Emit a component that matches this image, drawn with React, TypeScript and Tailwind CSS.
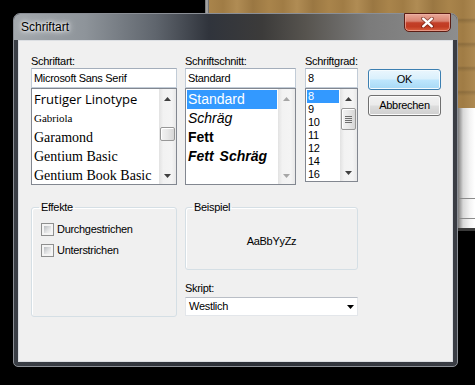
import React from "react";

const ui = "font-['Liberation_Sans',Arial,sans-serif] text-[11px] tracking-[-0.3px] text-black";

function Arrow({ dir, disabled }: { dir: "up" | "down"; disabled?: boolean }) {
  const fill = disabled ? "#a6a6a6" : "#404040";
  return (
    <svg width="7" height="4" viewBox="0 0 7 4">
      {dir === "up" ? <polygon points="3.5,0 7,4 0,4" fill={fill} /> : <polygon points="0,0 7,0 3.5,4" fill={fill} />}
    </svg>
  );
}

function ScrollBar({ thumb, disabled }: { thumb?: "font" | "size"; disabled?: boolean }) {
  return (
    <div className="w-[17px] h-full flex flex-col bg-[linear-gradient(90deg,#e2e2e2,#f2f2f2_25%,#f4f4f4_75%,#e8e8e8)]">
      <div className="h-[17px] flex items-center justify-center pt-[3px]">
        <Arrow dir="up" disabled={disabled} />
      </div>
      <div className="flex-1">
        {thumb === "font" && (
          <div className="ml-px mt-[21px] w-[15px] h-[14px] rounded-[2px] border border-[#979797] bg-[linear-gradient(90deg,#f3f3f3,#e8e8e8_50%,#d6d6d6)] shadow-[inset_1px_1px_0_#fff]" />
        )}
        {thumb === "size" && (
          <div className="ml-px mt-[2px] w-[15px] h-[22px] rounded-[2px] border border-[#979797] bg-[linear-gradient(90deg,#f3f3f3,#e8e8e8_50%,#d6d6d6)] shadow-[inset_1px_1px_0_#fff] flex flex-col items-center justify-center gap-[1px]">
            <div className="w-[7px] h-px bg-[#6e6e6e]" />
            <div className="w-[7px] h-px bg-[#6e6e6e]" />
            <div className="w-[7px] h-px bg-[#6e6e6e]" />
            <div className="w-[7px] h-px bg-[#6e6e6e]" />
          </div>
        )}
      </div>
      <div className="h-[17px] flex items-center justify-center">
        <Arrow dir="down" disabled={disabled} />
      </div>
    </div>
  );
}

function TextBox({ value }: { value: string }) {
  return (
    <div className="h-[20px] bg-white border border-[#c2ccd7] border-t-[#a4aebb] pl-[2px] flex items-center leading-none">
      {value}
    </div>
  );
}

function Check({ label }: { label: string }) {
  return (
    <div className="flex items-center gap-[3px] h-[13px]">
      <div className="w-[13px] h-[13px] border border-[#8e8f8f] bg-[#f4f4f4] p-[2px]">
        <div className="w-full h-full bg-[linear-gradient(135deg,#b9bcc0,#e4e5e6_60%,#f5f5f5)]" />
      </div>
      <span className="leading-[13px]">{label}</span>
    </div>
  );
}

export default function App() {
  return (
    <div className="relative w-[475px] h-[385px] bg-black overflow-hidden">
      {/* desktop behind the dialog */}
      <div className="absolute left-[205px] top-0 w-[4px] h-[14px] bg-[linear-gradient(90deg,#6d6d6d,#b4b4b4,#5a5a5a)]" />
      <div className="absolute left-[209px] top-0 w-[266px] h-[108px] bg-[repeating-linear-gradient(90deg,#a9844b_0px,#a07c45_14px,#b08c54_28px,#9a7742_44px,#a9844b_60px)]" />
      <div className="absolute left-[209px] top-0 w-[266px] h-[108px] bg-[repeating-linear-gradient(180deg,#00000000_0px,#00000000_18px,#00000022_20px,#00000000_24px)]" />
      <div className="absolute left-[458px] top-[108px] w-[17px] h-[120px] bg-[linear-gradient(90deg,#7c7c7c,#d8d8d8_30%,#f4f4f4_70%,#ffffff)]" />
      <div className="absolute left-[458px] top-[198px] w-[17px] h-px bg-[#8a8a8a]" />
      <div className="absolute left-[458px] top-[218px] w-[17px] h-px bg-[#8a8a8a]" />
      <div className="absolute left-[458px] top-[228px] w-[17px] h-[3px] bg-[#3a3a3a]" />

      {/* dialog window */}
      <div className="absolute left-[13px] top-[13px] w-[445px] h-[354px] rounded-t-[7px] rounded-b-[5px] border border-[#8b8f96] bg-[linear-gradient(90deg,#3a3e45,#2b2f36_50%,#3a3d44)] flex flex-col">
        {/* title bar */}
        <div className="h-[26px] shrink-0 rounded-t-[6px] bg-[linear-gradient(90deg,#a3a8ad_0%,#8e949a_16%,#5f656d_32%,#30343c_44%,#3c3b3a_56%,#57544f_66%,#7b7b7b_80%,#8d8d8d_100%)] flex items-start justify-between">
          <div className="pl-[7px] h-[26px] flex items-center font-['Liberation_Sans',Arial,sans-serif] text-[12px] text-black [text-shadow:0_0_8px_#ffffff,0_0_5px_#ffffff,0_0_3px_#ffffffaa]">
            Schriftart
          </div>
          <div className="-mt-px mr-[6px] w-[47px] h-[19px] rounded-b-[5px] border border-[#5c1d14] shadow-[inset_0_0_0_1px_#f0b4a6aa] bg-[linear-gradient(180deg,#e9a898_0%,#d98371_42%,#c23f28_52%,#c13b22_75%,#d8603f_100%)] flex items-center justify-center">
            <svg width="13" height="11" viewBox="0 0 13 11">
              <path d="M2 1.5 L11 9.5 M11 1.5 L2 9.5" stroke="#5a1a10" strokeWidth="4" strokeLinecap="round" opacity="0.55" />
              <path d="M2.2 1.7 L10.8 9.3 M10.8 1.7 L2.2 9.3" stroke="#ffffff" strokeWidth="2.4" strokeLinecap="round" />
            </svg>
          </div>
        </div>

        {/* client area */}
        <div className={`mx-[4px] h-[322px] border border-[#dcdfe3] bg-[#f0f0f0] pt-[13px] pl-[12px] ${ui}`}>
          {/* top row */}
          <div className="flex items-start">
            <div className="w-[146px] flex flex-col">
              <div className="h-[14px] leading-[14px]">Schriftart:</div>
              <TextBox value="Microsoft Sans Serif" />
              <div className="h-[97px] border border-[#828790] bg-white flex">
                <div className="flex-1 pt-px pl-px tracking-normal">
                  <div className="h-[19px] pl-px flex items-center font-['Open_Sans',sans-serif] text-[13px]">Frutiger Linotype</div>
                  <div className="h-[19px] pl-px flex items-center font-['Liberation_Serif',serif] text-[11px]">Gabriola</div>
                  <div className="h-[19px] pl-px flex items-center font-['Liberation_Serif',serif] text-[14px]">Garamond</div>
                  <div className="h-[19px] pl-px flex items-center font-['Liberation_Serif',serif] text-[14px]">Gentium Basic</div>
                  <div className="h-[19px] pl-px flex items-center font-['Liberation_Serif',serif] text-[14px]">Gentium Book Basic</div>
                </div>
                <ScrollBar thumb="font" />
              </div>
            </div>

            <div className="ml-[8px] w-[111px] flex flex-col">
              <div className="h-[14px] leading-[14px]">Schriftschnitt:</div>
              <TextBox value="Standard" />
              <div className="h-[97px] border border-[#828790] bg-white flex">
                <div className="flex-1 pt-px px-px text-[14px] tracking-normal">
                  <div className="h-[19px] pl-px flex items-center bg-[#3399ff] text-white">Standard</div>
                  <div className="h-[19px] pl-px flex items-center italic">Schräg</div>
                  <div className="h-[19px] pl-px flex items-center font-bold">Fett</div>
                  <div className="h-[19px] pl-px flex items-center font-bold italic [word-spacing:2px]">Fett Schräg</div>
                </div>
                <ScrollBar disabled />
              </div>
            </div>

            <div className="ml-[9px] w-[53px] flex flex-col">
              <div className="h-[14px] leading-[14px]">Schriftgrad:</div>
              <TextBox value="8" />
              <div className="h-[94px] border border-[#828790] bg-white flex">
                <div className="flex-1 pt-px px-px">
                  <div className="h-[13px] pl-px flex items-center bg-[#3399ff] text-white">8</div>
                  <div className="h-[13px] pl-px flex items-center">9</div>
                  <div className="h-[13px] pl-px flex items-center">10</div>
                  <div className="h-[13px] pl-px flex items-center">11</div>
                  <div className="h-[13px] pl-px flex items-center">12</div>
                  <div className="h-[13px] pl-px flex items-center">14</div>
                  <div className="h-[13px] pl-px flex items-center">16</div>
                </div>
                <ScrollBar thumb="size" />
              </div>
            </div>

            <div className="ml-[10px] mt-[15px] w-[73px] flex flex-col gap-[5px]">
              <button className="h-[21px] rounded-[3px] border border-[#3c7fb1] shadow-[inset_0_0_0_1px_#f4fbfe] bg-[linear-gradient(180deg,#eaf6fd_0%,#d9f0fc_48%,#bee6fd_52%,#a7d9f5_100%)] flex items-center justify-center">
                OK
              </button>
              <button className="h-[21px] rounded-[3px] border border-[#707070] shadow-[inset_0_0_0_1px_#fbfbfb] bg-[linear-gradient(180deg,#f2f2f2_0%,#ebebeb_48%,#dddddd_52%,#cfcfcf_100%)] flex items-center justify-center">
                Abbrechen
              </button>
            </div>
          </div>

          {/* bottom row */}
          <div className="mt-[15px] flex items-start">
            <fieldset className="w-[146px] h-[117px] border border-[#d5dfe5] rounded-[3px] shadow-[inset_1px_1px_0_#ffffff]">
              <legend className="ml-[7px] px-[2px] leading-[14px]">Effekte</legend>
              <div className="pt-[9px] pl-[9px] flex flex-col gap-[8px]">
                <Check label="Durchgestrichen" />
                <Check label="Unterstrichen" />
              </div>
            </fieldset>

            <div className="ml-[8px] w-[173px] flex flex-col">
              <fieldset className="h-[70px] border border-[#d5dfe5] rounded-[3px] shadow-[inset_1px_1px_0_#ffffff]">
                <legend className="ml-[6px] px-[2px] leading-[14px]">Beispiel</legend>
                <div className="h-[54px] flex items-center justify-center">AaBbYyZz</div>
              </fieldset>
              <div className="mt-[11px] h-[14px] leading-[14px]">Skript:</div>
              <div className="mt-[2px] h-[19px] bg-white border border-[#e3e6ea] border-t-[#b9bec6] pl-[3px] pr-[3px] flex items-center justify-between">
                <span>Westlich</span>
                <svg width="7" height="4" viewBox="0 0 7 4">
                  <polygon points="0,0 7,0 3.5,4" fill="#000" />
                </svg>
              </div>
            </div>
          </div>
        </div>
      </div>
    </div>
  );
}
